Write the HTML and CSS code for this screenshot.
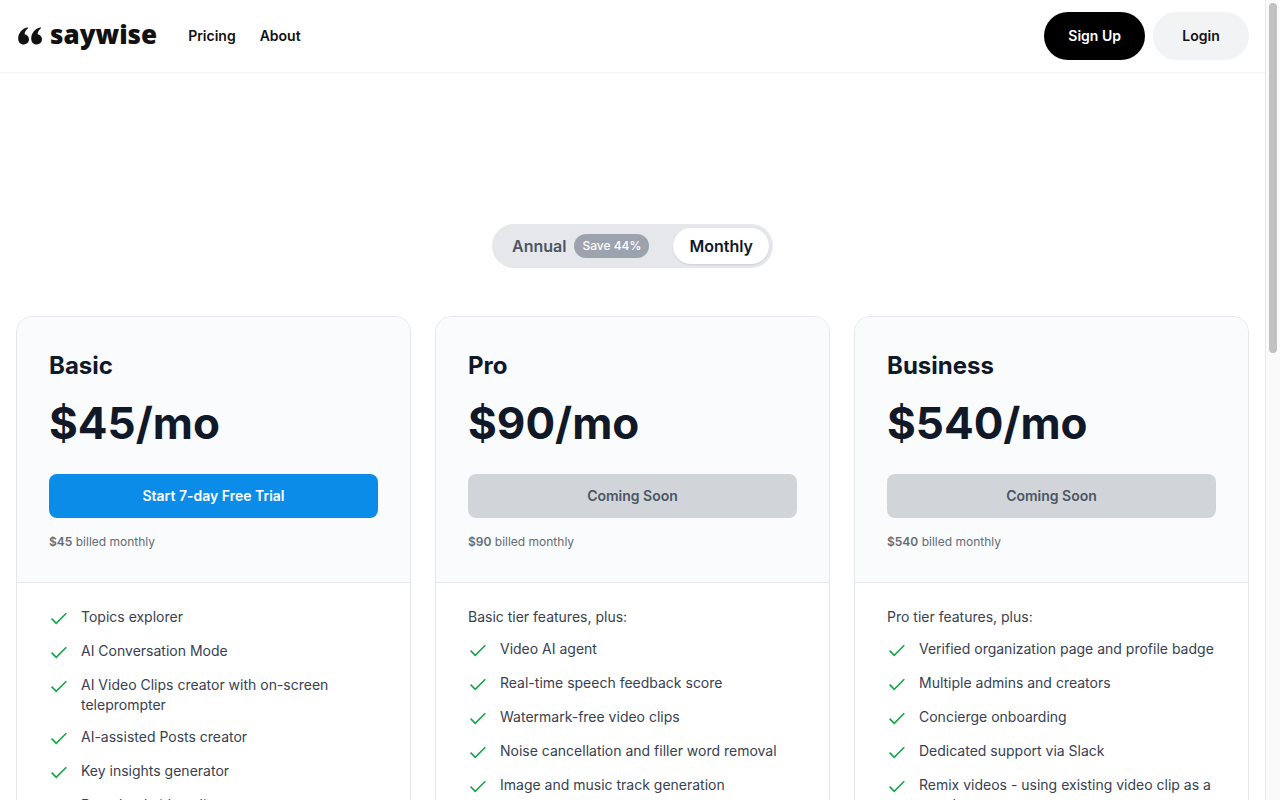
FILE: index.html
```
<!DOCTYPE html>
<html lang="en">
<head>
  <meta charset="UTF-8">
  <meta name="viewport" content="width=device-width, initial-scale=1.0">
  <title>Saywise - Pricing</title>
  <link rel="stylesheet" href="styles.css">
</head>
<body>

<!-- check icon, reused in every feature list -->
<svg class="sprite" aria-hidden="true">
  <symbol id="check" viewBox="0 0 20 20">
    <path d="M2.6 9.6 L7.2 14.3 L17.3 4.3" fill="none" stroke="currentColor" stroke-width="1.6"/>
  </symbol>
</svg>

<div class="page">
  <header class="navbar">
    <a class="logo" href="#">
      <svg class="logo-mark" viewBox="0 0 24 18" aria-hidden="true">
        <path id="quote" d="M9.3 .5C4.2 1.3 .2 6.2 .2 11.4C.2 15.2 2.3 17.4 5.6 17.4C8.7 17.4 11 15.3 11 12.3C11 9.6 9.1 7.6 6.6 7.2C6.8 5 7.9 3.1 9.7 1.6C10.3 1 10 .4 9.3 .5Z"/>
        <use href="#quote" x="13"/>
      </svg>
      <span>saywise</span>
    </a>
    <nav class="nav-links">
      <a href="#">Pricing</a>
      <a href="#">About</a>
    </nav>
    <div class="nav-actions">
      <button class="pill pill-dark">Sign Up</button>
      <button class="pill pill-light">Login</button>
    </div>
  </header>

  <main>
    <div class="billing-toggle">
      <button class="billing-option">Annual <span class="badge">Save 44%</span></button>
      <button class="billing-option active">Monthly</button>
    </div>

    <section class="plans">
      <article class="plan">
        <div class="plan-header">
          <h2>Basic</h2>
          <p class="price">$45/mo</p>
          <button class="cta">Start 7-day Free Trial</button>
          <p class="billed"><strong>$45</strong> billed monthly</p>
        </div>
        <div class="plan-body">
          <ul>
            <li><svg class="check"><use href="#check"/></svg>Topics explorer</li>
            <li><svg class="check"><use href="#check"/></svg>AI Conversation Mode</li>
            <li><svg class="check"><use href="#check"/></svg>AI Video Clips creator with on-screen teleprompter</li>
            <li><svg class="check"><use href="#check"/></svg>AI-assisted Posts creator</li>
            <li><svg class="check"><use href="#check"/></svg>Key insights generator</li>
            <li><svg class="check"><use href="#check"/></svg>Download video clips</li>
          </ul>
        </div>
      </article>

      <article class="plan">
        <div class="plan-header">
          <h2>Pro</h2>
          <p class="price">$90/mo</p>
          <button class="cta cta-soon">Coming Soon</button>
          <p class="billed"><strong>$90</strong> billed monthly</p>
        </div>
        <div class="plan-body">
          <p class="plan-note">Basic tier features, plus:</p>
          <ul>
            <li><svg class="check"><use href="#check"/></svg>Video AI agent</li>
            <li><svg class="check"><use href="#check"/></svg>Real-time speech feedback score</li>
            <li><svg class="check"><use href="#check"/></svg>Watermark-free video clips</li>
            <li><svg class="check"><use href="#check"/></svg>Noise cancellation and filler word removal</li>
            <li><svg class="check"><use href="#check"/></svg>Image and music track generation</li>
          </ul>
        </div>
      </article>

      <article class="plan">
        <div class="plan-header">
          <h2>Business</h2>
          <p class="price">$540/mo</p>
          <button class="cta cta-soon">Coming Soon</button>
          <p class="billed"><strong>$540</strong> billed monthly</p>
        </div>
        <div class="plan-body">
          <p class="plan-note">Pro tier features, plus:</p>
          <ul>
            <li><svg class="check"><use href="#check"/></svg>Verified organization page and profile badge</li>
            <li><svg class="check"><use href="#check"/></svg>Multiple admins and creators</li>
            <li><svg class="check"><use href="#check"/></svg>Concierge onboarding</li>
            <li><svg class="check"><use href="#check"/></svg>Dedicated support via Slack</li>
            <li><svg class="check"><use href="#check"/></svg>Remix videos - using existing video clip as a template</li>
          </ul>
        </div>
      </article>
    </section>
  </main>
</div>

<div class="scrollbar" aria-hidden="true"><div class="scroll-thumb"></div></div>

</body>
</html>
```
FILE: styles.css
```
* {
  box-sizing: border-box;
}

body {
  margin: 0;
  height: 100vh;
  display: flex;
  overflow: hidden;
  font-family: Inter, sans-serif;
  font-size: 14px;
  line-height: 20px;
  color: #374151;
  background: #fff;
}

h2, p, ul {
  margin: 0;
  padding: 0;
}

a {
  color: inherit;
  text-decoration: none;
}

button {
  border: none;
  font: inherit;
  cursor: pointer;
}

.sprite {
  position: absolute;
  width: 0;
  height: 0;
}

.page {
  flex: 1;
  height: 100vh;
  overflow: hidden;
}

/* Navbar */
.navbar {
  display: flex;
  align-items: center;
  padding: 12px 16px;
  border-bottom: 1px solid #f3f4f6;
}

.logo {
  display: flex;
  align-items: center;
  gap: 8px;
  margin-left: 2px;
  font-family: "Open Sans", sans-serif;
  font-size: 26px;
  font-weight: 800;
  line-height: 36px;
  color: #111;
}

.logo span {
  padding-bottom: 4px;
}

.logo-mark {
  width: 24px;
  height: 18px;
  fill: #111;
}

.nav-links {
  display: flex;
  gap: 24px;
  margin-left: 31px;
  font-weight: 600;
  color: #111;
}

.nav-actions {
  display: flex;
  gap: 8px;
  margin-left: auto;
}

.pill {
  height: 48px;
  border-radius: 24px;
  font-weight: 600;
}

.pill-dark {
  padding: 0 24px;
  background: #000;
  color: #fff;
}

.pill-light {
  min-width: 96px;
  background: #f1f3f5;
  color: #111;
}

/* Annual / Monthly switch */
main {
  padding: 151px 16px 0;
}

.billing-toggle {
  display: flex;
  gap: 8px;
  width: fit-content;
  margin: 0 auto 48px;
  padding: 4px;
  border-radius: 22px;
  background: #e5e7eb;
}

.billing-option {
  display: flex;
  align-items: center;
  gap: 8px;
  height: 36px;
  padding: 0 16px;
  border-radius: 18px;
  background: transparent;
  font-size: 16px;
  font-weight: 600;
  color: #4b5563;
}

.billing-option.active {
  background: #fff;
  color: #111827;
  box-shadow: 0 1px 2px rgba(0, 0, 0, 0.1);
}

.badge {
  padding: 4px 8px;
  border-radius: 12px;
  background: #9ca3af;
  color: #fff;
  font-size: 12px;
  font-weight: 500;
  line-height: 16px;
}

/* Plan cards */
.plans {
  display: grid;
  grid-template-columns: repeat(3, 1fr);
  gap: 24px;
}

.plan {
  border: 1px solid #e5e7eb;
  border-radius: 16px;
  overflow: hidden;
}

.plan-header {
  padding: 32px;
  border-bottom: 1px solid #e5e7eb;
  background: #f9fbfd;
}

.plan h2 {
  font-size: 24px;
  font-weight: 700;
  line-height: 34px;
  color: #111827;
}

.price {
  margin: 16px 0 27px;
  font-size: 44px;
  font-weight: 700;
  line-height: 48px;
  color: #111827;
}

.cta {
  width: 100%;
  height: 44px;
  border-radius: 8px;
  background: #0c8ce9;
  color: #fff;
  font-weight: 600;
}

.cta-soon {
  background: #d1d5da;
  color: #4b5563;
}

.billed {
  margin-top: 16px;
  font-size: 12px;
  line-height: 16px;
  color: #666b73;
}

.billed strong {
  font-weight: 600;
}

.plan-body {
  padding: 24px 32px 32px;
}

.plan-note {
  margin-bottom: 12px;
}

.plan ul {
  display: flex;
  flex-direction: column;
  gap: 12px;
  list-style: none;
}

.plan li {
  display: flex;
  gap: 12px;
}

.check {
  flex: none;
  width: 20px;
  height: 20px;
  margin-top: 2px;
  color: #16a34a;
}

/* Scrollbar */
.scrollbar {
  width: 15px;
  padding: 3px;
  border-left: 1px solid #e8e8e8;
  background: #fafafa;
}

.scroll-thumb {
  width: 8px;
  height: 350px;
  border-radius: 4px;
  background: #c1c1c1;
}
```
